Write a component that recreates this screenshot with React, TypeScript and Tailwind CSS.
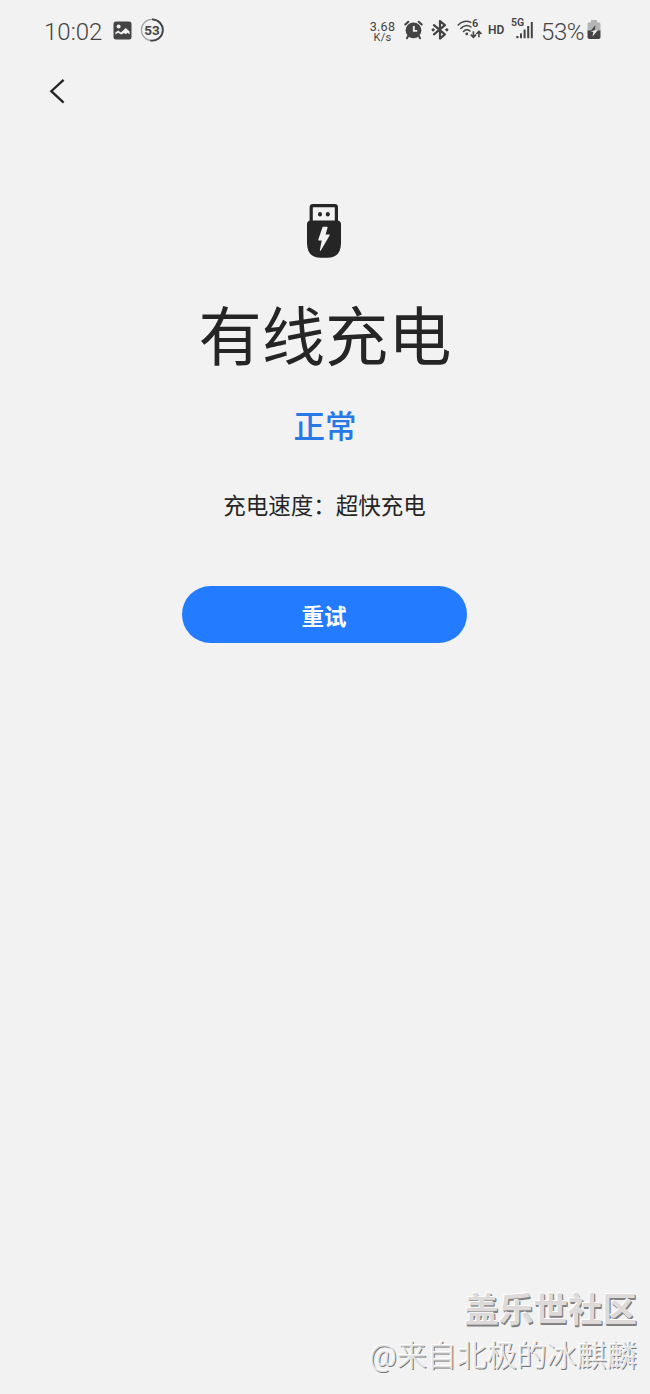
import React from "react";

const zhFont = "font-['Roboto','Noto_Sans_CJK_SC',sans-serif]";

function PictureIcon() {
  return (
    <svg width="19" height="19" viewBox="0 0 19 19" className="shrink-0">
      <rect x="0.5" y="0.5" width="18" height="18" rx="2.5" fill="#444" />
      <path
        d="M2.4 13.6V11.6L5.2 9.4L7.8 11.6L12.8 7L16.6 10.4V13.6L14.6 11.8L12.8 13.2L11 12L8.4 13.6L5 11.8Z"
        fill="#f2f2f2"
      />
      <circle cx="5.6" cy="5.4" r="2" fill="#f2f2f2" />
    </svg>
  );
}

function ProgressBadge({ value }: { value: number }) {
  return (
    <div className="relative h-6 w-6 shrink-0">
      <svg width="24" height="24" viewBox="0 0 24 24" fill="none">
        <circle cx="12" cy="12" r="10.6" stroke="#a3a3a3" strokeWidth="1.2" />
        <path
          d="M12 1.4A10.6 10.6 0 1 1 10.2 22.4"
          stroke="#444"
          strokeWidth="1.9"
        />
      </svg>
      <span className="absolute inset-0 text-center text-[13.5px] leading-6 font-bold">
        {value}
      </span>
    </div>
  );
}

function AlarmIcon() {
  return (
    <svg width="19" height="20" viewBox="0 0 19 20" className="shrink-0">
      <circle cx="9.5" cy="10.3" r="7.9" fill="#444" />
      <path
        d="M1.3 4.6L4.3 1.8M17.7 4.6L14.7 1.8M4.5 15.5L2.9 18.2M14.5 15.5L16.1 18.2"
        stroke="#444"
        strokeWidth="2"
        strokeLinecap="round"
      />
      <path d="M9.8 6V10.9H13.2" fill="none" stroke="#f2f2f2" strokeWidth="1.8" />
    </svg>
  );
}

function BluetoothIcon() {
  return (
    <svg width="18" height="20" viewBox="0 0 18 20" fill="none" className="shrink-0">
      <path
        d="M3 5.2L13.9 14.4L9 18.6V1L13.9 5.2L3 14.4"
        stroke="#444"
        strokeWidth="2.2"
        strokeLinejoin="round"
        strokeLinecap="round"
      />
      <path d="M0.3 9.8L2 7.9L4.2 9.8L2 11.7ZM17.7 9.8L16 7.9L13.8 9.8L16 11.7Z" fill="#444" />
    </svg>
  );
}

function WifiIcon() {
  return (
    <div className="relative h-5 w-[26px] shrink-0">
      <svg width="26" height="20" viewBox="0 0 26 20" fill="none">
        <path
          d="M1.2 5C4.8 1.1 10 0.5 13.8 2.4M3.8 8.4C6.6 5.2 10.8 4.8 14 7M6.5 11.4C8.2 9.4 11 9.2 13 11"
          stroke="#444"
          strokeWidth="1.5"
          strokeLinecap="round"
        />
        <circle cx="9.8" cy="13.9" r="1.4" fill="#444" />
        <path
          d="M16.4 11.3V17.2M13.8 14.6L16.4 17.3L19 14.6M21.9 17.3V11.4M19.3 14L21.9 11.3L24.5 14"
          stroke="#444"
          strokeWidth="1.6"
        />
      </svg>
      <span className="absolute -top-px left-[15px] text-[11px] leading-[10px] font-semibold">
        6
      </span>
    </div>
  );
}

function SignalIcon() {
  return (
    <div className="relative h-5 w-[22px] shrink-0">
      <span className="absolute -top-[2px] -left-px text-[10.5px] leading-[10px] font-semibold">
        5G
      </span>
      <svg width="22" height="20" viewBox="0 0 22 20" fill="#444">
        <rect x="4.3" y="16" width="2.2" height="2.2" />
        <rect x="8" y="13.4" width="2" height="4.8" />
        <rect x="11.6" y="9.6" width="2" height="8.6" />
        <rect x="15.2" y="6" width="2" height="12.2" />
        <rect x="18.8" y="2" width="2" height="16.2" />
      </svg>
    </div>
  );
}

function BatteryIcon() {
  return (
    <svg width="14" height="20" viewBox="0 0 14 20" className="shrink-0">
      <path
        d="M4 0H10V2.3H11.5Q13.5 2.3 13.5 4.3V11H0.5V4.3Q0.5 2.3 2.5 2.3H4Z"
        fill="#b5b5b5"
      />
      <path d="M0.5 10.5H13.5V17Q13.5 19 11.5 19H2.5Q0.5 19 0.5 17Z" fill="#444" />
      <path d="M8.3 5.2L3.2 11.6H6.2L5.8 10.5H8Z" fill="#444" />
      <path d="M5.4 16.4L10.8 10.2H7.2L3.6 11.8H6.5Z" fill="#f2f2f2" />
    </svg>
  );
}

function StatusBar() {
  return (
    <div className="flex h-[60px] items-center pr-[49px] pl-[44px] text-[#444]">
      <span className="w-[69px] pt-[3px] text-[24px] leading-[28px] font-[350]">
        10:02
      </span>
      <PictureIcon />
      <div className="w-2" />
      <ProgressBadge value={53} />
      <div className="flex-1" />
      <div className="mr-[8px] flex w-[27px] flex-col items-center pt-[3px] text-[12.5px] leading-[11px] tracking-[0.3px]">
        <span>3.68</span>
        <span className="text-[11px] leading-[11px]">K/s</span>
      </div>
      <AlarmIcon />
      <div className="w-[8px]" />
      <BluetoothIcon />
      <div className="w-[8px]" />
      <WifiIcon />
      <span className="ml-[5px] w-[24px] text-[12px] leading-4 font-semibold">HD</span>
      <SignalIcon />
      <span className="ml-[7px] w-[46px] pt-[3px] text-[24px] leading-[28px] font-[350] tracking-[-0.4px]">
        53%
      </span>
      <BatteryIcon />
    </div>
  );
}

function UsbIcon() {
  return (
    <svg width="36" height="54" viewBox="0 0 36 54">
      <path
        d="M5.2 17V3.5Q5.2 1.7 7 1.7H28.6Q30.4 1.7 30.4 3.5V17"
        fill="none"
        stroke="#252525"
        strokeWidth="3.2"
      />
      <ellipse cx="14" cy="10.2" rx="2" ry="2.3" fill="#252525" />
      <ellipse cx="21.8" cy="10.2" rx="2" ry="2.3" fill="#252525" />
      <path
        d="M5 16.5H31Q35 16.5 35 20.5V39Q35 53.7 21.5 53.7H14.5Q1 53.7 1 39V20.5Q1 16.5 5 16.5Z"
        fill="#252525"
      />
      <path
        d="M16.4 23.4Q16.6 22.8 17.2 22.8H21Q21.8 22.8 21.6 23.6L19.6 30.4H23Q24.1 30.4 23.6 31.4L14.8 46.6Q13.8 47.4 13.9 46L15.7 36.4H12.9Q12 36.4 12.3 35.5Z"
        fill="#f2f2f2"
      />
    </svg>
  );
}

function Watermark() {
  return (
    <div className="flex flex-col items-end pr-[13px] pb-[15px] text-right whitespace-nowrap">
      <div className="text-[34.5px] leading-[46px] font-bold text-[#dedada] [text-shadow:-1px_-1px_0_#fff,1px_1px_0_#828282,1px_2px_0_#828282]">
        盖乐世社区
      </div>
      <div className="text-[30px] leading-[46px] font-light text-[#e2e2e2] [text-shadow:-1px_-1px_0_#fff,1px_1px_0_#777]">
        @来自北极的冰麒麟
      </div>
    </div>
  );
}

export default function App() {
  return (
    <div
      lang="zh-CN"
      className={`flex h-[1394px] w-[650px] flex-col bg-[#f2f2f2] text-[#252525] ${zhFont}`}
    >
      <StatusBar />
      <div className="flex h-[62px] items-center pl-[49px]">
        <button aria-label="返回">
          <svg width="17" height="26" viewBox="0 0 17 26" fill="none">
            <path d="M14.6 1.8L2.3 13.2L14.6 24.6" stroke="#252525" strokeWidth="2.3" />
          </svg>
        </button>
      </div>
      <main className="flex flex-1 flex-col items-center pt-[82px] pr-[2px]">
        <UsbIcon />
        <h1 className="mt-[34px] pl-[2px] text-[63.2px] leading-[92px]">有线充电</h1>
        <p className="mt-[21px] pl-[2px] text-[31.5px] leading-[46px] font-medium text-[#2878e8]">
          正常
        </p>
        <p className="mt-[39px] pl-[1px] text-[22.5px] leading-[32px]">充电速度：超快充电</p>
        <button className="mt-[64px] h-[57px] w-[285px] rounded-full bg-[#237bff] pt-[5px] text-[22.5px] leading-[52px] font-bold text-white">
          重试
        </button>
      </main>
      <Watermark />
    </div>
  );
}
